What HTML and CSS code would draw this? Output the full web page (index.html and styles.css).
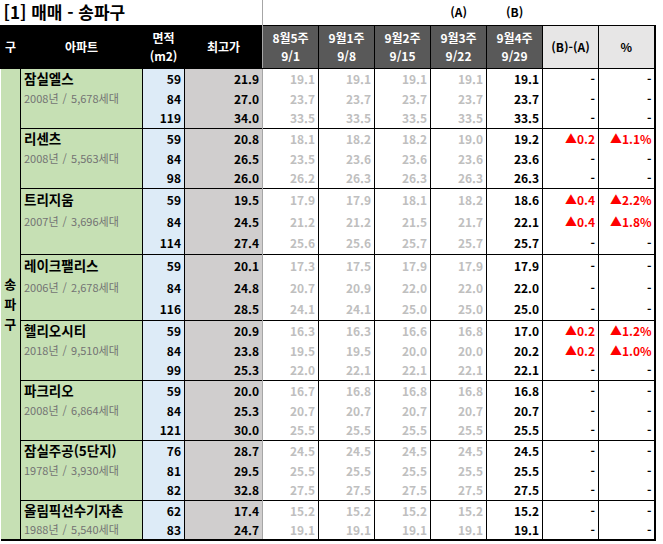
FILE: index.html
```html
<!DOCTYPE html>
<html lang="ko">
<head>
<meta charset="utf-8">
<link rel="stylesheet" href="styles.css">
</head>
<body>
<table class="sheet">
<colgroup>
<col class="c-gu"><col class="c-apt"><col class="c-area"><col class="c-max">
<col class="c-wk"><col class="c-wk"><col class="c-wk"><col class="c-wk"><col class="c-wk">
<col class="c-wk"><col class="c-wk">
</colgroup>
<tr class="title-row">
<td colspan="4" class="title">[1] 매매 - 송파구</td>
<td></td><td></td><td></td>
<td class="mark">(A)</td><td class="mark">(B)</td>
<td></td><td></td>
</tr>
<tr class="head">
<th class="hb">구</th><th class="hb">아파트</th><th class="hb">면적<br>(m2)</th><th class="hb hmax">최고가</th>
<th class="hw">8월5주<br>9/1</th><th class="hw">9월1주<br>9/8</th><th class="hw">9월2주<br>9/15</th><th class="hw">9월3주<br>9/22</th><th class="hw">9월4주<br>9/29</th>
<th class="hl">(B)-(A)</th><th class="hl hend">%</th>
</tr>

<tr class="r gs">
<td rowspan="23" class="gu">송<br>파<br>구</td>
<td class="apt name">잠실엘스</td><td class="area">59</td><td class="max">21.9</td>
<td class="old">19.1</td><td class="old">19.1</td><td class="old">19.1</td><td class="old">19.1</td><td class="cur">19.1</td><td class="df">-</td><td class="df end">-</td>
</tr>
<tr class="r"><td class="apt yr">2008년 / 5,678세대</td><td class="area">84</td><td class="max">27.0</td>
<td class="old">23.7</td><td class="old">23.7</td><td class="old">23.7</td><td class="old">23.7</td><td class="cur">23.7</td><td class="df">-</td><td class="df end">-</td></tr>
<tr class="r"><td class="apt"></td><td class="area">119</td><td class="max">34.0</td>
<td class="old">33.5</td><td class="old">33.5</td><td class="old">33.5</td><td class="old">33.5</td><td class="cur">33.5</td><td class="df">-</td><td class="df end">-</td></tr>

<tr class="r gs"><td class="apt name">리센츠</td><td class="area">59</td><td class="max">20.8</td>
<td class="old">18.1</td><td class="old">18.2</td><td class="old">18.2</td><td class="old">19.0</td><td class="cur">19.2</td><td class="df up">▲0.2</td><td class="df up end">▲1.1%</td></tr>
<tr class="r"><td class="apt yr">2008년 / 5,563세대</td><td class="area">84</td><td class="max">26.5</td>
<td class="old">23.5</td><td class="old">23.6</td><td class="old">23.6</td><td class="old">23.6</td><td class="cur">23.6</td><td class="df">-</td><td class="df end">-</td></tr>
<tr class="r"><td class="apt"></td><td class="area">98</td><td class="max">26.0</td>
<td class="old">26.2</td><td class="old">26.3</td><td class="old">26.3</td><td class="old">26.3</td><td class="cur">26.3</td><td class="df">-</td><td class="df end">-</td></tr>

<tr class="r t gs"><td class="apt name">트리지움</td><td class="area">59</td><td class="max">19.5</td>
<td class="old">17.9</td><td class="old">17.9</td><td class="old">18.1</td><td class="old">18.2</td><td class="cur">18.6</td><td class="df up">▲0.4</td><td class="df up end">▲2.2%</td></tr>
<tr class="r t"><td class="apt yr">2007년 / 3,696세대</td><td class="area">84</td><td class="max">24.5</td>
<td class="old">21.2</td><td class="old">21.2</td><td class="old">21.5</td><td class="old">21.7</td><td class="cur">22.1</td><td class="df up">▲0.4</td><td class="df up end">▲1.8%</td></tr>
<tr class="r t"><td class="apt"></td><td class="area">114</td><td class="max">27.4</td>
<td class="old">25.6</td><td class="old">25.6</td><td class="old">25.7</td><td class="old">25.7</td><td class="cur">25.7</td><td class="df">-</td><td class="df end">-</td></tr>

<tr class="r t gs"><td class="apt name">레이크팰리스</td><td class="area">59</td><td class="max">20.1</td>
<td class="old">17.3</td><td class="old">17.5</td><td class="old">17.9</td><td class="old">17.9</td><td class="cur">17.9</td><td class="df">-</td><td class="df end">-</td></tr>
<tr class="r t"><td class="apt yr">2006년 / 2,678세대</td><td class="area">84</td><td class="max">24.8</td>
<td class="old">20.7</td><td class="old">20.9</td><td class="old">22.0</td><td class="old">22.0</td><td class="cur">22.0</td><td class="df">-</td><td class="df end">-</td></tr>
<tr class="r t"><td class="apt"></td><td class="area">116</td><td class="max">28.5</td>
<td class="old">24.1</td><td class="old">24.1</td><td class="old">25.0</td><td class="old">25.0</td><td class="cur">25.0</td><td class="df">-</td><td class="df end">-</td></tr>

<tr class="r gs"><td class="apt name">헬리오시티</td><td class="area">59</td><td class="max">20.9</td>
<td class="old">16.3</td><td class="old">16.3</td><td class="old">16.6</td><td class="old">16.8</td><td class="cur">17.0</td><td class="df up">▲0.2</td><td class="df up end">▲1.2%</td></tr>
<tr class="r"><td class="apt yr">2018년 / 9,510세대</td><td class="area">84</td><td class="max">23.8</td>
<td class="old">19.5</td><td class="old">19.5</td><td class="old">20.0</td><td class="old">20.0</td><td class="cur">20.2</td><td class="df up">▲0.2</td><td class="df up end">▲1.0%</td></tr>
<tr class="r"><td class="apt"></td><td class="area">99</td><td class="max">25.3</td>
<td class="old">22.0</td><td class="old">22.1</td><td class="old">22.1</td><td class="old">22.1</td><td class="cur">22.1</td><td class="df">-</td><td class="df end">-</td></tr>

<tr class="r gs"><td class="apt name">파크리오</td><td class="area">59</td><td class="max">20.0</td>
<td class="old">16.7</td><td class="old">16.8</td><td class="old">16.8</td><td class="old">16.8</td><td class="cur">16.8</td><td class="df">-</td><td class="df end">-</td></tr>
<tr class="r"><td class="apt yr">2008년 / 6,864세대</td><td class="area">84</td><td class="max">25.3</td>
<td class="old">20.7</td><td class="old">20.7</td><td class="old">20.7</td><td class="old">20.7</td><td class="cur">20.7</td><td class="df">-</td><td class="df end">-</td></tr>
<tr class="r"><td class="apt"></td><td class="area">121</td><td class="max">30.0</td>
<td class="old">25.5</td><td class="old">25.5</td><td class="old">25.5</td><td class="old">25.5</td><td class="cur">25.5</td><td class="df">-</td><td class="df end">-</td></tr>

<tr class="r gs"><td class="apt name">잠실주공(5단지)</td><td class="area">76</td><td class="max">28.7</td>
<td class="old">24.5</td><td class="old">24.5</td><td class="old">24.5</td><td class="old">24.5</td><td class="cur">24.5</td><td class="df">-</td><td class="df end">-</td></tr>
<tr class="r"><td class="apt yr">1978년 / 3,930세대</td><td class="area">81</td><td class="max">29.5</td>
<td class="old">25.5</td><td class="old">25.5</td><td class="old">25.5</td><td class="old">25.5</td><td class="cur">25.5</td><td class="df">-</td><td class="df end">-</td></tr>
<tr class="r"><td class="apt"></td><td class="area">82</td><td class="max">32.8</td>
<td class="old">27.5</td><td class="old">27.5</td><td class="old">27.5</td><td class="old">27.5</td><td class="cur">27.5</td><td class="df">-</td><td class="df end">-</td></tr>

<tr class="r gs"><td class="apt name">올림픽선수기자촌</td><td class="area">62</td><td class="max">17.4</td>
<td class="old">15.2</td><td class="old">15.2</td><td class="old">15.2</td><td class="old">15.2</td><td class="cur">15.2</td><td class="df">-</td><td class="df end">-</td></tr>
<tr class="r last"><td class="apt yr">1988년 / 5,540세대</td><td class="area">83</td><td class="max">24.7</td>
<td class="old">19.1</td><td class="old">19.1</td><td class="old">19.1</td><td class="old">19.1</td><td class="cur">19.1</td><td class="df">-</td><td class="df end">-</td></tr>
</table>
</body>
</html>
```

FILE: styles.css
```css
* { box-sizing: border-box; }
body {
  margin: 0;
  background: #fff;
  font-family: "Noto Sans CJK KR", "Noto Sans", sans-serif;
  color: #000;
}
.sheet {
  border-collapse: collapse;
  table-layout: fixed;
  width: 655px;
}
.sheet td, .sheet th {
  padding: 0;
  font-size: 12px;
  line-height: 15px;
  font-weight: 700;
  white-space: nowrap;
  overflow: hidden;
}
.c-gu { width: 20px; }
.c-apt { width: 122px; }
.c-area { width: 42px; }
.c-max { width: 78px; }
.c-wk { width: 56px; }

.title-row { height: 25px; }
.title {
  font-size: 17px !important;
  line-height: 22px !important;
  padding-left: 3px !important;
  border-right: 1px solid #a6a6a6;
  vertical-align: middle;
}
.mark {
  text-align: center;
  font-size: 12px !important;
  vertical-align: middle;
  padding-bottom: 2px !important;
}

.head { height: 43px; }
.head th {
  color: #fff;
  text-align: center;
  vertical-align: middle;
  line-height: 18px;
  border-bottom: 1px solid #000;
}
.hb { background: #000; border: 1px solid #000; }
.hmax { border-right: 1px solid #a6a6a6 !important; }
.hw { background: #595959; border: 1px solid #000; }
.hl {
  background: #e7e6e6;
  color: #000 !important;
  border: 1px solid #000;
}
.hend { border-right: 2px solid #000 !important; }

.r { height: 20px; }
.r.t { height: 22px; }
.r td { vertical-align: middle; }
.gs td { border-top: 1px solid #000; }
.gs td.gu { border-top: none; }
.last td { border-bottom: 2px solid #000; }

.gu {
  background: #c6e0b4;
  text-align: center;
  line-height: 20px !important;
  font-size: 13px !important;
  border-right: 1px solid #000;
  border-bottom: 2px solid #000;
}
.apt {
  background: #c6e0b4;
  text-align: left;
  padding-left: 3px !important;
  border-right: 1px solid #000;
}
.name { font-size: 13.5px !important; }
.yr {
  font-family: "Noto Sans CJK KR", sans-serif;
  font-size: 11px !important;
  font-weight: 400 !important;
  color: #737373;
  word-spacing: 1px;
}
.area {
  background: #ddebf7;
  text-align: right;
  padding-right: 3px !important;
  border-right: 1px solid #000;
}
.max {
  background: #d0cece;
  text-align: right;
  padding-right: 3px !important;
  border-right: 1px solid #a6a6a6;
}
.old, .cur, .df {
  text-align: right;
  padding-right: 3px !important;
  border-right: 1px solid #000;
}
.old { color: #bfbfbf; }
.cur { color: #000; }
.df { color: #000; }
.up { color: #ff0000; }
.end { border-right: 2px solid #000; padding-right: 2px !important; }
```
